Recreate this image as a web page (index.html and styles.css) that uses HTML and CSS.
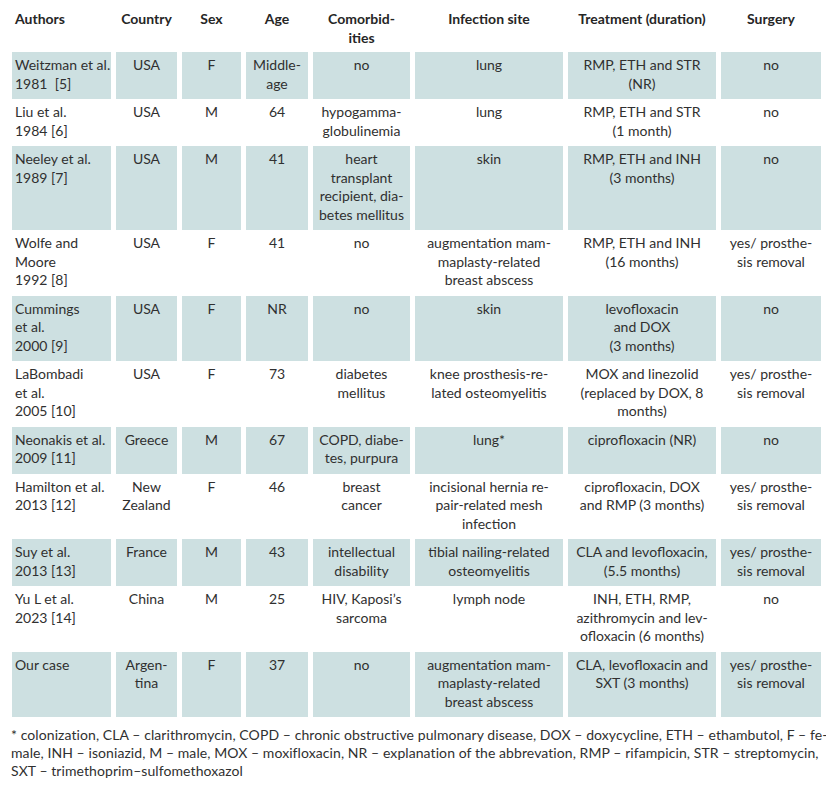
FILE: index.html
```html
<!DOCTYPE html>
<html lang="en">
<head>
    <meta charset="UTF-8">
    <title>Reported cases</title>
    <link rel="stylesheet" href="styles.css">
</head>
<body>

<table class="cases">
    <colgroup>
        <col class="c-authors">
        <col class="c-country">
        <col class="c-sex">
        <col class="c-age">
        <col class="c-comorb">
        <col class="c-site">
        <col class="c-treat">
        <col class="c-surgery">
    </colgroup>
    <thead>
        <tr>
            <th class="left">Authors</th>
            <th>Country</th>
            <th>Sex</th>
            <th>Age</th>
            <th>Comorbid-<br>ities</th>
            <th>Infection site</th>
            <th>Treatment (duration)</th>
            <th>Surgery</th>
        </tr>
    </thead>
    <tbody>
        <tr class="shaded">
            <td class="left">Weitzman et al.<br>1981&nbsp; [5]</td>
            <td>USA</td>
            <td>F</td>
            <td>Middle-<br>age</td>
            <td>no</td>
            <td>lung</td>
            <td>RMP, ETH and STR<br>(NR)</td>
            <td>no</td>
        </tr>
        <tr>
            <td class="left">Liu et al.<br>1984 [6]</td>
            <td>USA</td>
            <td>M</td>
            <td>64</td>
            <td>hypogamma-<br>globulinemia</td>
            <td>lung</td>
            <td>RMP, ETH and STR<br>(1 month)</td>
            <td>no</td>
        </tr>
        <tr class="shaded">
            <td class="left">Neeley et al.<br>1989 [7]</td>
            <td>USA</td>
            <td>M</td>
            <td>41</td>
            <td>heart<br>transplant<br>recipient, dia-<br>betes mellitus</td>
            <td>skin</td>
            <td>RMP, ETH and INH<br>(3 months)</td>
            <td>no</td>
        </tr>
        <tr>
            <td class="left">Wolfe and<br>Moore<br>1992 [8]</td>
            <td>USA</td>
            <td>F</td>
            <td>41</td>
            <td>no</td>
            <td>augmentation mam-<br>maplasty-related<br>breast abscess</td>
            <td>RMP, ETH and INH<br>(16 months)</td>
            <td>yes/ prosthe-<br>sis removal</td>
        </tr>
        <tr class="shaded">
            <td class="left">Cummings<br>et al.<br>2000 [9]</td>
            <td>USA</td>
            <td>F</td>
            <td>NR</td>
            <td>no</td>
            <td>skin</td>
            <td>levofloxacin<br>and DOX<br>(3 months)</td>
            <td>no</td>
        </tr>
        <tr>
            <td class="left">LaBombadi<br>et al.<br>2005 [10]</td>
            <td>USA</td>
            <td>F</td>
            <td>73</td>
            <td>diabetes<br>mellitus</td>
            <td>knee prosthesis-re-<br>lated osteomyelitis</td>
            <td>MOX and linezolid<br>(replaced by DOX, 8<br>months)</td>
            <td>yes/ prosthe-<br>sis removal</td>
        </tr>
        <tr class="shaded">
            <td class="left">Neonakis et al.<br>2009 [11]</td>
            <td>Greece</td>
            <td>M</td>
            <td>67</td>
            <td>COPD, diabe-<br>tes, purpura</td>
            <td>lung*</td>
            <td>ciprofloxacin (NR)</td>
            <td>no</td>
        </tr>
        <tr>
            <td class="left">Hamilton et al.<br>2013 [12]</td>
            <td>New<br>Zealand</td>
            <td>F</td>
            <td>46</td>
            <td>breast<br>cancer</td>
            <td>incisional hernia re-<br>pair-related mesh<br>infection</td>
            <td>ciprofloxacin, DOX<br>and RMP (3 months)</td>
            <td>yes/ prosthe-<br>sis removal</td>
        </tr>
        <tr class="shaded">
            <td class="left">Suy et al.<br>2013 [13]</td>
            <td>France</td>
            <td>M</td>
            <td>43</td>
            <td>intellectual<br>disability</td>
            <td>tibial nailing-related<br>osteomyelitis</td>
            <td>CLA and levofloxacin,<br>(5.5 months)</td>
            <td>yes/ prosthe-<br>sis removal</td>
        </tr>
        <tr>
            <td class="left">Yu L et al.<br>2023 [14]</td>
            <td>China</td>
            <td>M</td>
            <td>25</td>
            <td>HIV, Kaposi’s<br>sarcoma</td>
            <td>lymph node</td>
            <td>INH, ETH, RMP,<br>azithromycin and lev-<br>ofloxacin (6 months)</td>
            <td>no</td>
        </tr>
        <tr class="shaded">
            <td class="left">Our case</td>
            <td>Argen-<br>tina</td>
            <td>F</td>
            <td>37</td>
            <td>no</td>
            <td>augmentation mam-<br>maplasty-related<br>breast abscess</td>
            <td>CLA, levofloxacin and<br>SXT (3 months)</td>
            <td>yes/ prosthe-<br>sis removal</td>
        </tr>
    </tbody>
</table>

<p class="footnote">
    * colonization, CLA – clarithromycin, COPD – chronic obstructive pulmonary disease, DOX – doxycycline, ETH – ethambutol, F – fe-<br>
    male, INH – isoniazid, M – male, MOX – moxifloxacin, NR – explanation of the abbrevation, RMP – rifampicin, STR – streptomycin,<br>
    SXT – trimethoprim–sulfomethoxazol
</p>

</body>
</html>
```

FILE: styles.css
```css
body {
    margin: 0;
    padding: 0 0 0 7px;
    background-color: #ffffff;
    font-family: Lato, "Open Sans", sans-serif;
    color: #303030;
}
.cases {
    table-layout: fixed;
    width: 819px;
    border-collapse: separate;
    border-spacing: 5px 0;
    font-size: 14px;
    line-height: 18.5px;
}
.c-authors { width: 99px; }
.c-country { width: 61px; }
.c-sex { width: 59px; }
.c-age { width: 62px; }
.c-comorb { width: 97px; }
.c-site { width: 148px; }
.c-treat { width: 148px; }
.c-surgery { width: 100px; }
.cases th,
.cases td {
    text-align: center;
    vertical-align: top;
    white-space: nowrap;
}
.cases th {
    padding: 10px 3px 5px;
    font-weight: bold;
    color: #262626;
}
.cases td {
    padding: 4px 3px 6px;
}
.cases .left {
    text-align: left;
}
.shaded td {
    background-color: #cde0e1;
}
.footnote {
    margin: 9px 0 0 4px;
    font-size: 14px;
    line-height: 18px;
    letter-spacing: 0.08px;
    white-space: nowrap;
}
```
